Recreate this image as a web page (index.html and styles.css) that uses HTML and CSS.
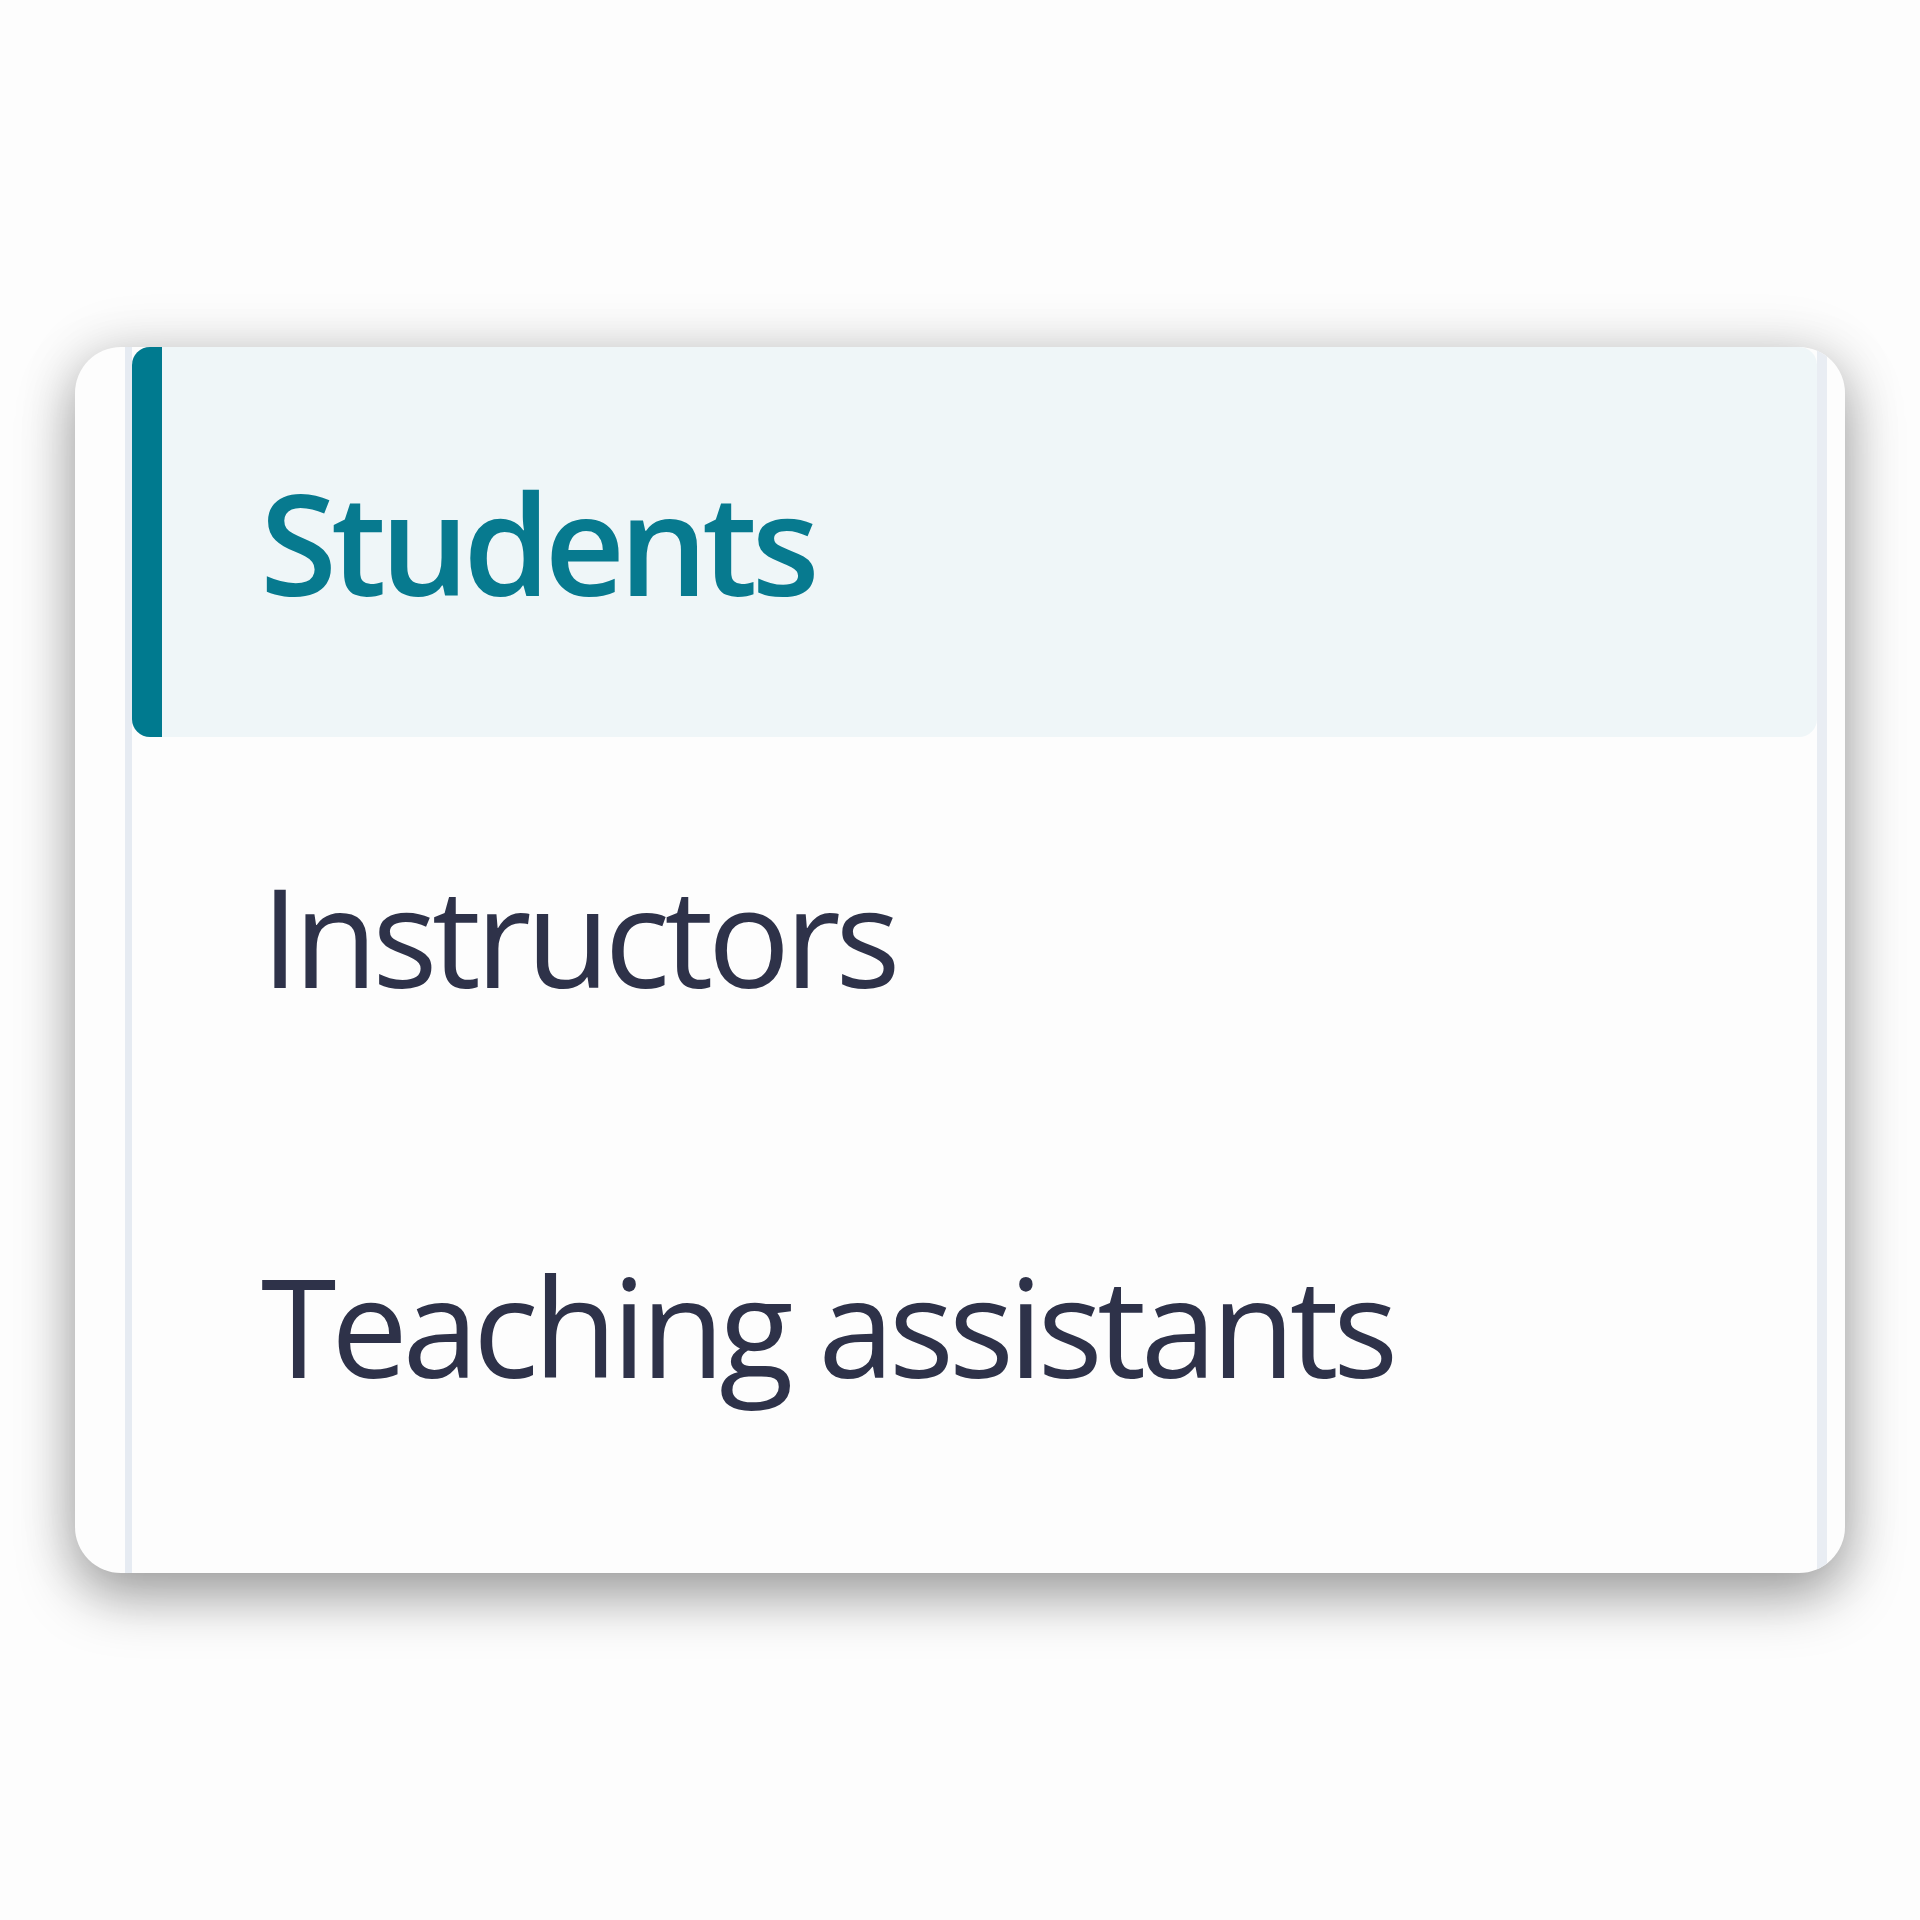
FILE: index.html
```html
<!DOCTYPE html>
<html lang="en">
<head>
<meta charset="utf-8">
<title>Roles</title>
<link rel="stylesheet" href="styles.css">
</head>
<body>
<div class="stage">
  <div class="card">
    <ul class="list">
      <li class="item selected">Students</li>
      <li class="item">Instructors</li>
      <li class="item">Teaching assistants</li>
    </ul>
  </div>
</div>
</body>
</html>
```
FILE: styles.css
```css
html, body {
  margin: 0;
  padding: 0;
  background: #fdfdfd;
}
.stage {
  width: 1920px;
  height: 1920px;
  padding: 347px 0 0 75px;
  box-sizing: border-box;
}
.card {
  width: 1770px;
  height: 1226px;
  border-radius: 46px;
  overflow: hidden;
  background: #fdfdfd;
  box-shadow: 0 24px 56px rgba(0, 0, 0, 0.34), 0 0 60px rgba(0, 0, 0, 0.12);
  padding: 0 18px 0 50px;
  box-sizing: border-box;
}
.list {
  list-style: none;
  margin: 0;
  padding: 0;
  height: 100%;
  border-left: 7px solid #e6ebf2;
  border-right: 10px solid #e9edf3;
  box-sizing: border-box;
}
.item {
  height: 390px;
  display: flex;
  align-items: center;
  border-left: 30px solid transparent;
  border-radius: 18px;
  padding: 6px 0 0 99px;
  box-sizing: border-box;
  font-family: "Open Sans", "Noto Sans", sans-serif;
  font-size: 137px;
  line-height: 190px;
  letter-spacing: -5.5px;
  color: #2e3249;
}
.item.selected {
  background: #eff6f8;
  border-left-color: #007a8f;
  padding: 0 0 0 98px;
  font-size: 140px;
  letter-spacing: -6px;
  color: #077a8f;
  font-weight: 600;
}
```
